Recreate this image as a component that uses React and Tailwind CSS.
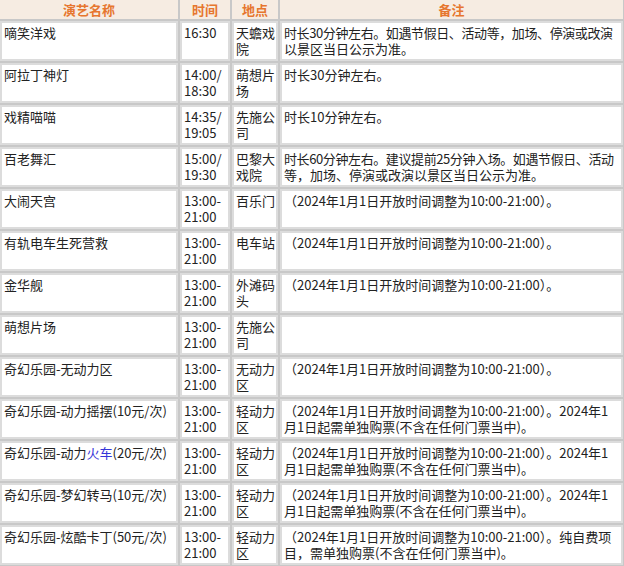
import React from "react";

const NOTE = "（2024年1月1日开放时间调整为10:00-21:00）。";

const rows = [
  { name: ["嘀笑洋戏"], time: ["16:30"], place: ["天蟾戏", "院"], note: ["时长30分钟左右。如遇节假日、活动等，加场、停演或改演", "以景区当日公示为准。"], tight: true },
  { name: ["阿拉丁神灯"], time: ["14:00/", "18:30"], place: ["萌想片", "场"], note: ["时长30分钟左右。"] },
  { name: ["戏精喵喵"], time: ["14:35/", "19:05"], place: ["先施公", "司"], note: ["时长10分钟左右。"] },
  { name: ["百老舞汇"], time: ["15:00/", "19:30"], place: ["巴黎大", "戏院"], note: ["时长60分钟左右。建议提前25分钟入场。如遇节假日、活动", "等，加场、停演或改演以景区当日公示为准。"], tight: true },
  { name: ["大闹天宫"], time: ["13:00-", "21:00"], place: ["百乐门"], note: [NOTE] },
  { name: ["有轨电车生死营救"], time: ["13:00-", "21:00"], place: ["电车站"], note: [NOTE] },
  { name: ["金华舰"], time: ["13:00-", "21:00"], place: ["外滩码", "头"], note: [NOTE] },
  { name: ["萌想片场"], time: ["13:00-", "21:00"], place: ["先施公", "司"], note: [] },
  { name: ["奇幻乐园-无动力区"], time: ["13:00-", "21:00"], place: ["无动力", "区"], note: [NOTE] },
  { name: ["奇幻乐园-动力摇摆(10元/次)"], time: ["13:00-", "21:00"], place: ["轻动力", "区"], note: [NOTE + "2024年1", "月1日起需单独购票(不含在任何门票当中)。"] },
  { name: "train", time: ["13:00-", "21:00"], place: ["轻动力", "区"], note: [NOTE + "2024年1", "月1日起需单独购票(不含在任何门票当中)。"] },
  { name: ["奇幻乐园-梦幻转马(10元/次)"], time: ["13:00-", "21:00"], place: ["轻动力", "区"], note: [NOTE + "2024年1", "月1日起需单独购票(不含在任何门票当中)。"] },
  { name: ["奇幻乐园-炫酷卡丁(50元/次)"], time: ["13:00-", "21:00"], place: ["轻动力", "区"], note: [NOTE + "纯自费项", "目，需单独购票(不含在任何门票当中)。"] },
];

function Lines({ lines, tight }) {
  return (
    <>
      {lines.map((l, i) => (
        <div
          key={i}
          className={
            tight && i === 0
              ? "whitespace-nowrap tracking-[-0.4px]"
              : "whitespace-nowrap"
          }
        >
          {l}
        </div>
      ))}
    </>
  );
}

function Cell({ children }) {
  return (
    <div className="h-[40px] border-2 border-[#dcdcdc] bg-white px-[2px] py-[2px] leading-[16px] text-[13px] text-[#222] overflow-hidden">
      {children}
    </div>
  );
}

function Head({ children }) {
  return (
    <div className="h-[19px] bg-[#f6ece2] flex items-center justify-center text-[13px] leading-[19px] font-bold text-[#e6762e]">
      {children}
    </div>
  );
}

export default function App() {
  return (
    <div
      className="w-[624px] h-[566px] bg-[#c8c8c8] pr-[1px] pb-[1px] overflow-hidden"
      style={{ fontFamily: '"Noto Sans CJK SC", "Noto Sans", sans-serif' }}
    >
      <div className="grid grid-cols-[178px_50px_46px_343px] gap-[2px]">
        <Head>演艺名称</Head>
        <Head>时间</Head>
        <Head>地点</Head>
        <Head>备注</Head>
        {rows.map((r, i) => (
          <React.Fragment key={i}>
            <Cell>
              {r.name === "train" ? (
                <div className="whitespace-nowrap">
                  奇幻乐园-动力<span className="text-[#3535d8]">火车</span>(20元/次)
                </div>
              ) : (
                <Lines lines={r.name} />
              )}
            </Cell>
            <Cell>
              <Lines lines={r.time} />
            </Cell>
            <Cell>
              <Lines lines={r.place} />
            </Cell>
            <Cell>
              <Lines lines={r.note} tight={r.tight} />
            </Cell>
          </React.Fragment>
        ))}
      </div>
    </div>
  );
}
